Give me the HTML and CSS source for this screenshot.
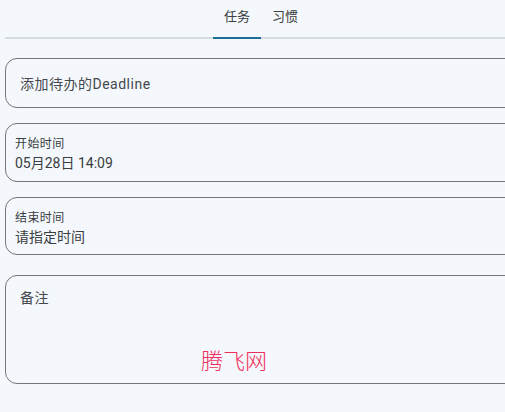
FILE: index.html
```html
<!DOCTYPE html>
<html lang="zh">
<head>
<meta charset="utf-8">
<link rel="stylesheet" href="styles.css">
</head>
<body>
<div class="page">
  <div class="tabs">
    <div class="tab active">任务</div>
    <div class="tab">习惯</div>
  </div>
  <div class="form">
    <div class="field field-plain">添加待办的Deadline</div>
    <div class="field field-time t1">
      <div class="label">开始时间</div>
      <div class="value">05月28日 14:09</div>
    </div>
    <div class="field field-time t2">
      <div class="label">结束时间</div>
      <div class="value">请指定时间</div>
    </div>
    <div class="field field-note">
      <div class="value hint">备注</div>
      <div class="watermark">腾飞网</div>
    </div>
  </div>
</div>
</body>
</html>
```
FILE: styles.css
```css
html, body {
  margin: 0;
  padding: 0;
  background: #f4f8fc;
  overflow: hidden;
  font-family: Roboto, "Noto Sans CJK SC", sans-serif;
  color: #3a3d41;
}
.page {
  margin-left: 5px;
  width: 512px;
}
.tabs {
  display: flex;
  justify-content: center;
  height: 37px;
  border-bottom: 2px solid #d6dce2;
}
.tab {
  width: 48px;
  text-align: center;
  font-size: 13px;
  line-height: 18px;
  padding-top: 8px;
  box-sizing: border-box;
  color: #3a3d41;
}
.tab.active {
  border-bottom: 2px solid #1b6f97;
  height: 39px;
}
.form {
  padding-top: 19px;
  display: flex;
  flex-direction: column;
  gap: 15px;
}
.field {
  border: 1px solid #73777c;
  border-radius: 12px;
  box-sizing: border-box;
  position: relative;
}
.field-plain {
  height: 50px;
  display: flex;
  align-items: center;
  padding-left: 14px;
  font-size: 14px;
  letter-spacing: 0.5px;
  padding-bottom: 1px;
  color: #45484c;
}
.field-time {
  padding: 12px 0 0 9px;
}
.t1 { height: 59px; }
.t2 { height: 58px; }
.label {
  font-size: 12px;
  line-height: 16px;
  letter-spacing: 0.4px;
}
.value {
  font-size: 14px;
  line-height: 20px;
}
.field-time .value {
  margin-top: 1px;
}
.hint {
  letter-spacing: 0.5px;
  color: #45484c;
}
.field-note {
  height: 109px;
  margin-top: 5px;
  padding: 12px 0 0 14px;
}
.watermark {
  position: absolute;
  left: 195px;
  top: 70px;
  font-size: 22px;
  line-height: 26px;
  color: #ee2f5d;
  font-family: "Noto Sans CJK SC", sans-serif;
  font-weight: 300;
}
```
